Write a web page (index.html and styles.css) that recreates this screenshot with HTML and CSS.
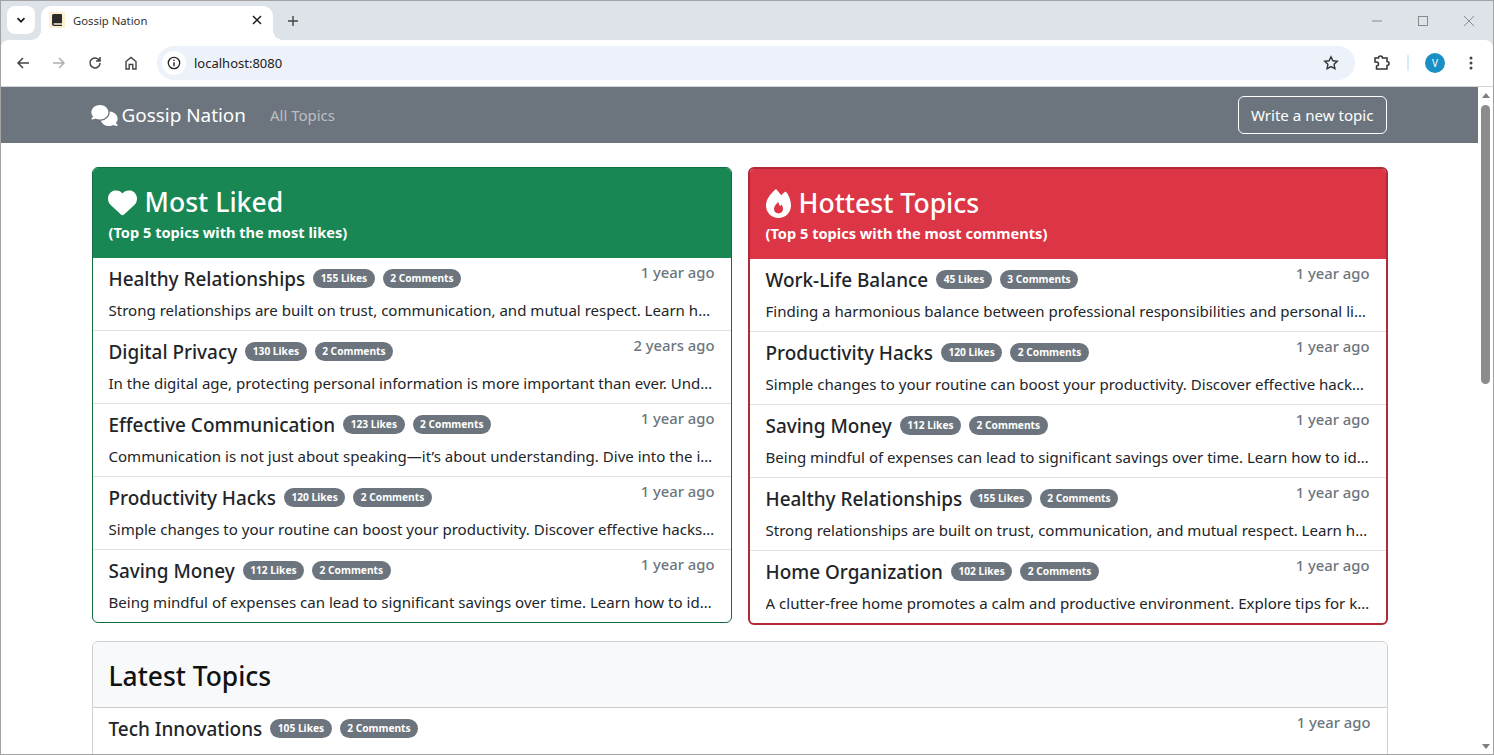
FILE: index.html
```html
<!DOCTYPE html>
<html lang="en">
<head>
<meta charset="utf-8">
<title>Gossip Nation</title>
<link rel="stylesheet" href="styles.css">
</head>
<body>
<div class="window">
  <header class="tabstrip">
    <button class="tab-search"><svg width="12" height="12" viewBox="0 0 12 12"><path d="M2.5 4.2 6 7.7l3.500-3.500" fill="none" stroke="#1f1f1f" stroke-width="1.700"/></svg></button>
    <div class="tab">
      <span class="favicon"><svg width="10" height="12" viewBox="0 0 10 12"><path d="M1.600 0H9a1 1 0 0 1 1 1v8.200H2a.9.9 0 0 0 0 1.600h8V12H1.800A1.800 1.800 0 0 1 0 10.200V1.600A1.600 1.600 0 0 1 1.600 0z" fill="#2b2b2b"/></svg></span>
      <span class="tab-title">Gossip Nation</span>
      <svg class="tab-close" width="10" height="10" viewBox="0 0 10 10"><path d="M1 1l8 8M9 1L1 9" stroke="#1f1f1f" stroke-width="1.500"/></svg>
    </div>
    <svg class="new-tab" width="12" height="12" viewBox="0 0 12 12"><path d="M6 1v10M1 6h10" stroke="#444" stroke-width="1.400"/></svg>
    <div class="win-controls">
      <svg width="12" height="12" viewBox="0 0 12 12"><path d="M1 6h10" stroke="#8a8a8a"/></svg>
      <svg width="12" height="12" viewBox="0 0 12 12"><rect x="1.500" y="1.500" width="9" height="9" fill="none" stroke="#8a8a8a"/></svg>
      <svg width="12" height="12" viewBox="0 0 12 12"><path d="M1 1l10 10M11 1 1 11" stroke="#8a8a8a"/></svg>
    </div>
  </header>
  <nav class="toolbar">
    <svg class="tool" width="16" height="16" viewBox="0 0 16 16"><path d="M14 8H3M8 3 3 8l5 5" fill="none" stroke="#444" stroke-width="1.500"/></svg>
    <svg class="tool" width="16" height="16" viewBox="0 0 16 16"><path d="M2 8h11M8 3l5 5-5 5" fill="none" stroke="#b0b0b0" stroke-width="1.500"/></svg>
    <svg class="tool" width="16" height="16" viewBox="0 0 16 16"><path d="M13 8a5 5 0 1 1-1.500-3.600L13 6M13 2v4H9" fill="none" stroke="#444" stroke-width="1.500"/></svg>
    <svg class="tool" width="16" height="16" viewBox="0 0 16 16"><path d="M3 14V6.500L8 2.500l5 4V14h-3.200V9.500H6.200V14z" fill="none" stroke="#444" stroke-width="1.400"/></svg>
    <div class="omnibox">
      <span class="info"><svg width="14" height="14" viewBox="0 0 14 14"><circle cx="7" cy="7" r="5.700" fill="none" stroke="#222" stroke-width="1.300"/><path d="M7 6.200v4M7 3.700v1.400" stroke="#222" stroke-width="1.400"/></svg></span>
      <span class="url">localhost:8080</span>
      <svg class="star" width="16" height="16" viewBox="0 0 16 16"><path d="m8 1.800 1.900 4 4.400.5-3.200 3 .8 4.400L8 11.600l-3.900 2.100.8-4.400-3.200-3 4.400-.5z" fill="none" stroke="#333" stroke-width="1.400"/></svg>
    </div>
    <svg class="puzzle" width="18" height="18" viewBox="0 0 18 18"><path d="M2 5h3.500a2 2 0 0 1 4 0H14v3.500a2 2 0 0 1 0 4V16H3.500V13a2 2 0 0 0 0-4H2z" fill="none" stroke="#333" stroke-width="1.500" transform="translate(0 -1)"/></svg>
    <span class="divider"></span>
    <span class="avatar">V</span>
    <svg class="kebab" width="4" height="14" viewBox="0 0 4 14"><circle cx="2" cy="2" r="1.500" fill="#444"/><circle cx="2" cy="7" r="1.500" fill="#444"/><circle cx="2" cy="12" r="1.500" fill="#444"/></svg>
  </nav>
  <div class="viewport">
    <main class="page">
      <div class="navbar">
        <div class="container nav-inner">
          <a class="brand"><svg width="27" height="21" viewBox="0 0 640 512"><path fill="#fff" d="M208 352c114.900 0 208-78.800 208-176S322.900 0 208 0S0 78.800 0 176c0 38.600 14.700 74.300 39.600 103.400c-3.500 9.400-8.700 17.700-14.200 24.700c-4.800 6.200-9.700 11-13.300 14.300c-1.800 1.600-3.300 2.900-4.300 3.700c-.5 .4-.9 .7-1.100 .8l-.2 .2C1 327.200-1.400 334.400 .8 340.900S9.100 352 16 352c21.800 0 43.800-5.600 62.100-12.500c9.200-3.500 17.800-7.400 25.200-11.400C134.100 343.300 169.800 352 208 352zM448 176c0 112.300-99.100 196.900-216.500 207C255.800 457.700 336.100 512 432 512c38.200 0 73.900-8.700 104.700-23.900c7.500 4 16 7.900 25.200 11.400c18.300 6.900 40.300 12.500 62.100 12.500c6.900 0 13.100-4.500 15.200-11.100c2.100-6.600-.2-13.800-5.800-17.900l-.2-.2c-.2-.2-.6-.4-1.100-.8c-1-.8-2.500-2-4.300-3.700c-3.600-3.300-8.500-8.100-13.300-14.300c-5.500-7-10.700-15.400-14.200-24.700c24.900-29 39.600-64.700 39.600-103.400c0-92.800-84.900-168.900-192.600-175.500c.4 5.100 .6 10.300 .6 15.500z"/></svg><span>Gossip Nation</span></a>
          <a class="nav-link">All Topics</a>
          <a class="btn-outline">Write a new topic</a>
        </div>
      </div>
      <div class="container content">
        <div class="row">
          <section class="card card-green">
            <div class="card-head">
              <h2><svg width="29" height="29" viewBox="0 0 512 512"><path fill="#fff" d="M47.600 300.400L228.300 469.100c7.500 7 17.400 10.900 27.700 10.900s20.200-3.900 27.700-10.900L464.400 300.400c30.400-28.300 47.600-68 47.600-109.500v-5.800c0-69.900-50.500-129.500-119.400-141C347 36.500 300.600 51.400 268 84L256 96 244 84c-32.600-32.600-79-47.500-124.600-39.900C50.500 55.600 0 115.200 0 185.100v5.800c0 41.500 17.200 81.200 47.600 109.500z"/></svg>Most Liked</h2>
              <p>(Top 5 topics with the most likes)</p>
            </div>
            <ul class="topics">
              <li><div class="topic-top"><h3>Healthy Relationships</h3><span class="badge">155 Likes</span><span class="badge">2 Comments</span><time>1 year ago</time></div><p>Strong relationships are built on trust, communication, and mutual respect. Learn how to strengthen your bonds with others.</p></li>
              <li><div class="topic-top"><h3>Digital Privacy</h3><span class="badge">130 Likes</span><span class="badge">2 Comments</span><time>2 years ago</time></div><p>In the digital age, protecting personal information is more important than ever. Understand the risks and how to stay safe.</p></li>
              <li><div class="topic-top"><h3>Effective Communication</h3><span class="badge">123 Likes</span><span class="badge">2 Comments</span><time>1 year ago</time></div><p>Communication is not just about speaking—it’s about understanding. Dive into the importance of listening well to others.</p></li>
              <li><div class="topic-top"><h3>Productivity Hacks</h3><span class="badge">120 Likes</span><span class="badge">2 Comments</span><time>1 year ago</time></div><p>Simple changes to your routine can boost your productivity. Discover effective hacks that work for your daily schedule.</p></li>
              <li><div class="topic-top"><h3>Saving Money</h3><span class="badge">112 Likes</span><span class="badge">2 Comments</span><time>1 year ago</time></div><p>Being mindful of expenses can lead to significant savings over time. Learn how to identify the costs that you can cut.</p></li>
            </ul>
          </section>
          <section class="card card-red">
            <div class="card-head">
              <h2><svg class="flame" width="25" height="29" viewBox="0 0 25 29"><path fill="#fff" fill-rule="evenodd" d="M10 0c2 2.200 3.800 4.200 5.200 6.300C16.400 5 18 3.500 19.800 2.500 23 6.200 25 11.600 25 16.500 25 23.500 19.400 29 12.500 29S0 23.500 0 16.500C0 10.500 4.500 4.500 10 0zM12.400 12.500c-.8 1.500-4.400 4.200-4.400 7.600 0 2.700 2 4.400 4.500 4.400s4.500-1.700 4.500-4.400c0-1.700-.6-3.300-1.500-4.500l-1.300 1.600c-.9-1.400-1.600-3-2.300-4.700z"/></svg>Hottest Topics</h2>
              <p>(Top 5 topics with the most comments)</p>
            </div>
            <ul class="topics">
              <li><div class="topic-top"><h3>Work-Life Balance</h3><span class="badge">45 Likes</span><span class="badge">3 Comments</span><time>1 year ago</time></div><p>Finding a harmonious balance between professional responsibilities and personal life is essential for long-term happiness.</p></li>
              <li><div class="topic-top"><h3>Productivity Hacks</h3><span class="badge">120 Likes</span><span class="badge">2 Comments</span><time>1 year ago</time></div><p>Simple changes to your routine can boost your productivity. Discover effective hacks that work for your daily schedule.</p></li>
              <li><div class="topic-top"><h3>Saving Money</h3><span class="badge">112 Likes</span><span class="badge">2 Comments</span><time>1 year ago</time></div><p>Being mindful of expenses can lead to significant savings over time. Learn how to identify the costs that you can cut.</p></li>
              <li><div class="topic-top"><h3>Healthy Relationships</h3><span class="badge">155 Likes</span><span class="badge">2 Comments</span><time>1 year ago</time></div><p>Strong relationships are built on trust, communication, and mutual respect. Learn how to strengthen your bonds with others.</p></li>
              <li><div class="topic-top"><h3>Home Organization</h3><span class="badge">102 Likes</span><span class="badge">2 Comments</span><time>1 year ago</time></div><p>A clutter-free home promotes a calm and productive environment. Explore tips for keeping your living space tidy every day.</p></li>
            </ul>
          </section>
        </div>
        <section class="card card-latest">
          <div class="latest-head"><h2>Latest Topics</h2></div>
          <ul class="topics">
            <li><div class="topic-top"><h3>Tech Innovations</h3><span class="badge">105 Likes</span><span class="badge">2 Comments</span><time>1 year ago</time></div><p>New technologies are changing how we live and work.</p></li>
          </ul>
        </section>
      </div>
    </main>
    <aside class="scrollbar">
      <span class="arrow-up"></span>
      <span class="thumb"></span>
      <span class="arrow-down"></span>
    </aside>
  </div>
</div>
</body>
</html>
```
FILE: styles.css
```css
* { box-sizing: border-box; }
html, body { margin: 0; height: 100%; overflow: hidden; }
body { font-family: "Noto Sans", "Open Sans", sans-serif; color: #212529; background: #fff; }
ul, h2, h3, p { margin: 0; padding: 0; }
ul { list-style: none; }

.window { height: 755px; display: flex; flex-direction: column; border: 1px solid #a3a3a3; background: #dee3e9; }

.tabstrip { height: 39px; background: #dee3e9; display: flex; align-items: flex-start; flex: none; padding: 5px 0 0 6px; position: relative; }
.tab-search { width: 28px; height: 28px; background: #fff; border: 0; border-radius: 8px; display: flex; align-items: center; justify-content: center; padding: 0; }
.tab { width: 232px; height: 34px; margin-left: 6px; background: #fff; border-radius: 10px 10px 0 0; display: flex; align-items: center; padding: 0 7px 6px 8px; position: relative; }
.tab::after { content: ""; position: absolute; right: -10px; bottom: 0; width: 10px; height: 10px; background: radial-gradient(circle at 100% 0, transparent 10px, #fff 10px); }
.tab::before { content: ""; position: absolute; left: -10px; bottom: 0; width: 10px; height: 10px; background: radial-gradient(circle at 0 0, transparent 10px, #fff 10px); }
.favicon { width: 16px; height: 16px; background: #fdf0d0; display: flex; align-items: center; justify-content: center; }
.tab-title { font: 11.300px "Noto Sans", sans-serif; color: #333; margin-left: 8px; flex: 1; }
.tab-close { margin-right: 4px; }
.new-tab { margin: 9px 0 0 14px; }
.win-controls { margin-left: auto; display: flex; gap: 34px; padding: 9px 18px 0 0; }

.toolbar { height: 47px; flex: none; background: #fff; display: flex; align-items: center; padding: 0 0 0 14px; border-bottom: 1px solid #d3d5d8; border-radius: 8px 8px 0 0; }
.tool { margin-right: 20px; }
.tool:nth-child(4) { margin-right: 18px; }
.omnibox { width: 1198px; height: 34px; background: #ecf1fa; border-radius: 17px; display: flex; align-items: center; padding: 0 16px 0 5px; }
.info { width: 24px; height: 24px; background: #fff; border-radius: 50%; display: flex; align-items: center; justify-content: center; }
.url { font: 13px "Noto Sans", sans-serif; color: #222; margin-left: 8px; flex: 1; }
.puzzle { margin-left: 18px; }
.divider { width: 2px; height: 16px; background: #d3eefa; margin-left: 16px; }
.avatar { width: 20px; height: 20px; margin-left: 16px; border-radius: 50%; background: #1a8fc4; color: #fff; font: 10px/20px "Noto Sans", sans-serif; text-align: center; }
.kebab { margin-left: 24px; }

.viewport { flex: 1; min-height: 0; display: flex; background: #fff; }
.page { flex: 1; min-width: 0; overflow: hidden; }
.scrollbar { width: 15px; flex: none; background: #fff; display: flex; flex-direction: column; align-items: center; padding-top: 6px; position: relative; }
.arrow-up { width: 0; height: 0; border: 4px solid transparent; border-top: 0; border-bottom: 5px solid #7e7e7e; }
.thumb { width: 9px; height: 279px; background: #8c8c8c; border-radius: 5px; margin-top: 7px; }
.arrow-down { position: absolute; bottom: 5px; width: 0; height: 0; border: 4px solid transparent; border-bottom: 0; border-top: 5px solid #7e7e7e; }

.container { width: 1320px; margin: 0 auto; padding: 0 12px; }
.navbar { height: 56px; background: #6c757d; }
.nav-inner { height: 100%; display: flex; align-items: center; }
.brand { display: flex; align-items: center; gap: 4px; font-size: 18.900px; color: #fff; margin-left: -1px; }
.nav-link { margin-left: 24px; font-size: 15px; color: rgba(255,255,255,.55); }
.btn-outline { margin-left: auto; margin-right: 1px; height: 38px; padding: 0 12px; border: 1px solid #fff; border-radius: 6px; color: #fff; font-size: 15.100px; display: flex; align-items: center; }

.content { padding-top: 24px; }
.row { display: grid; grid-template-columns: 1fr 1fr; gap: 16px; align-items: start; }
.card { border: 1px solid rgba(0,0,0,.18); border-radius: 6px; overflow: hidden; min-width: 0; }
.card-green { border-color: #146c43; }
.card-red { border: 2px solid #b02a37; }
.card-head { padding: 17px 16px 0; color: #fff; height: 90px; }
.card-green .card-head { background: #198754; }
.card-red .card-head { background: #dc3545; }
.card-head h2 { font-size: 26.600px; font-weight: 500; line-height: 34px; display: flex; align-items: center; gap: 8px; margin-left: -1px; }
.flame { margin: 0 0 0 1px; }
.card-head p { font-size: 14.600px; font-weight: 700; line-height: 21px; margin-top: 3px; }
.topics li { height: 73px; padding: 8px 16px; border-top: 1px solid #dee2e6; }
.topics li:first-child { border-top: 0; height: 72px; }
.topic-top { display: flex; align-items: center; height: 26px; gap: 8px; }
.topic-top h3 { font-size: 18.950px; font-weight: 500; line-height: 24px; }
.badge { background: #6c757d; color: #fff; font-size: 10.200px; font-weight: 700; line-height: 19px; height: 19px; padding: 0 7.500px; border-radius: 10px; margin-bottom: 2px; }
.topic-top time { margin-left: auto; align-self: flex-start; margin-top: -1px; font-size: 14.800px; font-weight: 500; color: #6c757d; line-height: 14px; }
.topics p { font-size: 15.050px; line-height: 22px; margin-top: 7px; white-space: nowrap; overflow: hidden; text-overflow: ellipsis; }
.card-latest { margin-top: 16px; }
.latest-head { height: 66px; background: #f8f9fa; border-bottom: 1px solid rgba(0,0,0,.18); padding: 2px 16px 0; display: flex; align-items: center; }
.latest-head h2 { font-size: 26.400px; font-weight: 500; color: #111; }
```
